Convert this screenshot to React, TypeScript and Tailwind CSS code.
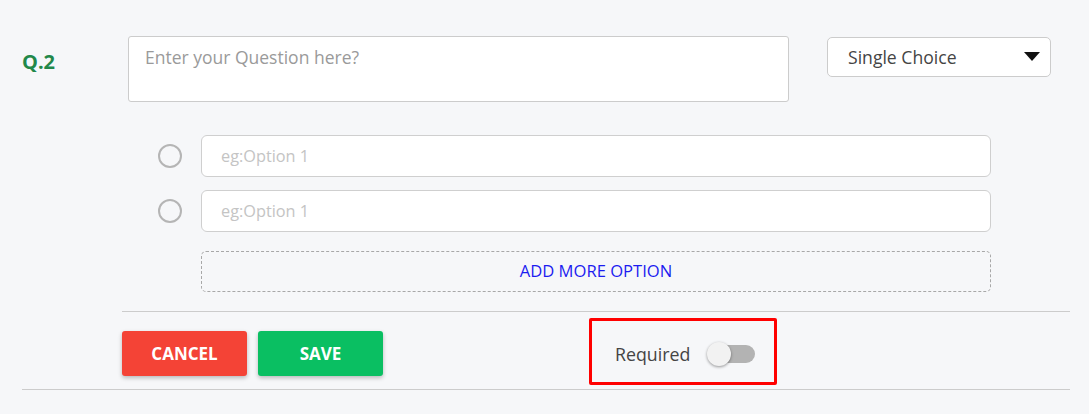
import React from "react";

const font = { fontFamily: '"Open Sans", "Noto Sans", sans-serif' };

const OptionRow = () => (
	<div className="flex items-center">
		<div className="w-[24px] h-[24px] rounded-full border-2 border-[#b5b5b5] bg-transparent" />
		<div className="ml-[19px] w-[790px] h-[42px] bg-white border border-[#cfcfcf] rounded-[6px] flex items-center pl-[19px] text-[16.3px] text-[#c4c4c4]">
			eg:Option 1
		</div>
	</div>
);

const App = () => {
	return (
		<main className="w-[1089px] h-[414px] bg-[#f6f7f9] overflow-hidden" style={font}>
			<div className="ml-[22px] w-[1048px]">
				<div className="flex items-start pt-[36px]">
					<div className="w-[106px] mt-[14px] text-[20px] leading-[24px] font-bold text-[#22884a]">Q.2</div>
					<div className="w-[661px] h-[66px] bg-white border border-[#cccccc] rounded-[3px] px-[16px] pt-[8px] text-[17.5px] leading-[24px] text-[#9a9a9a]">
						Enter your Question here?
					</div>
					<div className="ml-[38px] mt-[1px] w-[224px] h-[40px] bg-white border border-[#cccccc] rounded-[5px] flex items-center justify-between pl-[20px] pr-[10px]">
						<span className="text-[17.6px] text-[#444]">Single Choice</span>
						<svg width="16" height="10" viewBox="0 0 16 10">
							<path d="M0 0 H16 L8 9 Z" fill="#111" />
						</svg>
					</div>
				</div>

				<div className="ml-[136px] mt-[33px] flex flex-col gap-[13px]">
					<OptionRow />
					<OptionRow />
				</div>

				<div className="ml-[179px] mt-[19px] w-[790px] h-[41px] border border-dashed border-[#a8a8a8] rounded-[5px] flex items-center justify-center text-[16.6px] text-[#1c1cf0]">
					ADD MORE OPTION
				</div>

				<div className="ml-[100px] mt-[19px] border-t border-[#cccccc]" />

				<div className="flex items-start ml-[100px]">
					<div className="flex gap-[11px] mt-[19px]">
						<button className="w-[125px] h-[45px] rounded-[3px] bg-[#f44336] text-white font-bold text-[17px] shadow-[0_2px_4px_rgba(0,0,0,0.25)]">
							CANCEL
						</button>
						<button className="w-[125px] h-[45px] rounded-[3px] bg-[#0abf62] text-white font-bold text-[17px] shadow-[0_2px_4px_rgba(0,0,0,0.25)]">
							SAVE
						</button>
					</div>
					<div className="ml-[206px] mt-[6px] w-[188px] h-[67px] border-[3px] border-[#ff0000] rounded-[2px] flex items-center pl-[23px] pt-[6px]">
						<span className="text-[17.8px] text-[#444]">Required</span>
						<div className="ml-[17px] relative w-[48px] h-[24px] flex items-center -mt-[2px]">
							<div className="ml-[6px] w-[42px] h-[18px] rounded-full bg-[#b3b3b3]" />
							<div className="absolute left-0 top-0 w-[24px] h-[24px] rounded-full bg-[#f2f2f2] shadow-[0_1px_3px_rgba(0,0,0,0.4)]" />
						</div>
					</div>
				</div>

				<div className="mt-[4px] border-t border-[#cccccc]" />
			</div>
		</main>
	);
};

export default App;
